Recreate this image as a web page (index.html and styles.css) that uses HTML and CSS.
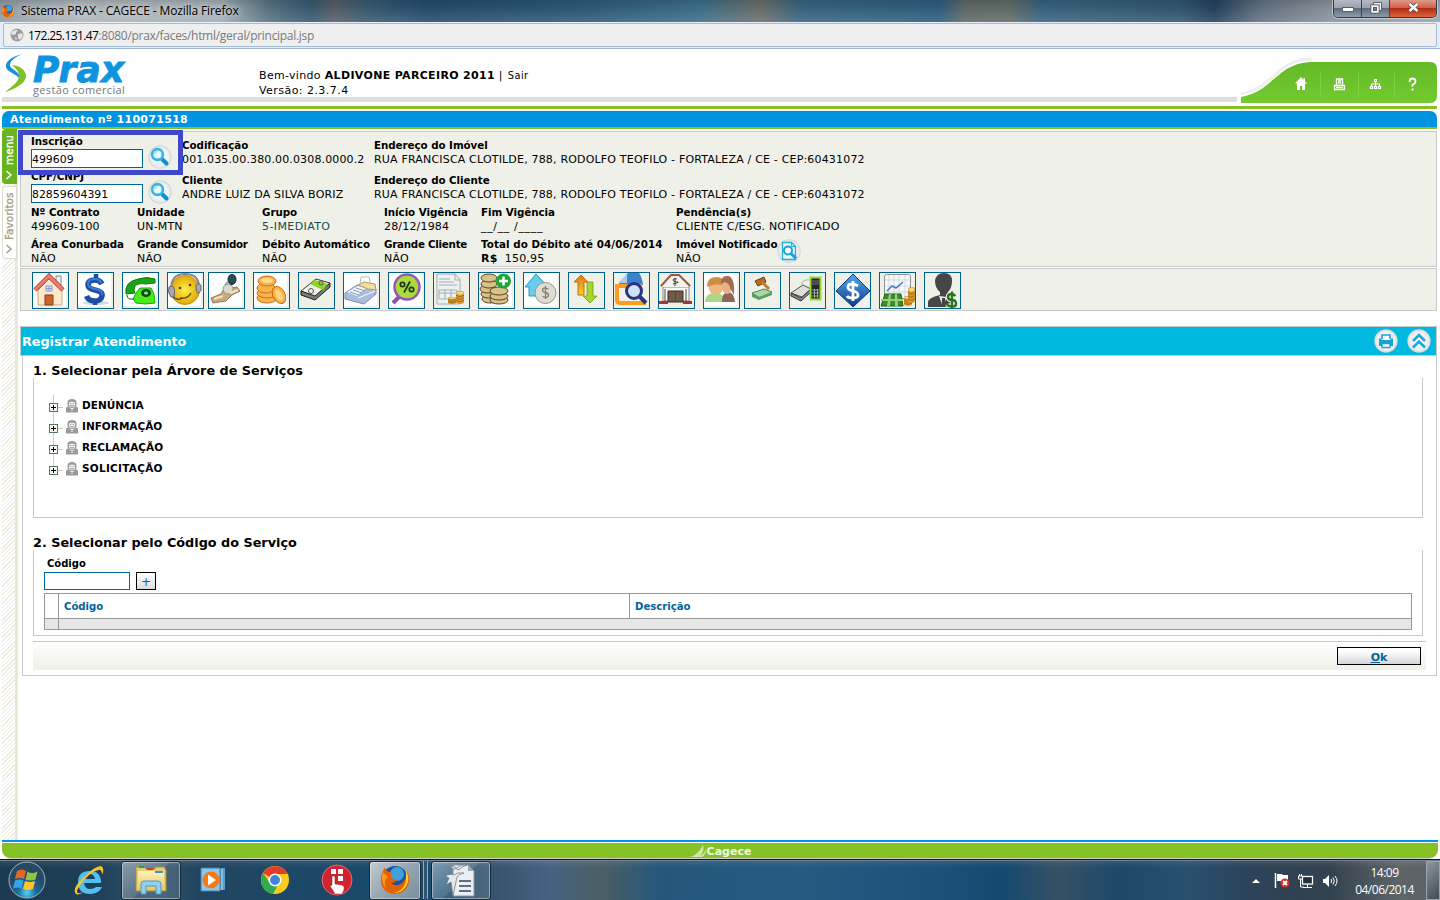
FILE: index.html
```html
<!DOCTYPE html>
<html lang="pt-BR">
<head>
<meta charset="utf-8">
<title>Sistema PRAX - CAGECE</title>
<link rel="stylesheet" href="styles.css">
</head>
<body>
<svg class="defs" width="0" height="0">
  <defs>
    <radialGradient id="disc"><stop offset="0" stop-color="#fff"/><stop offset=".8" stop-color="#eceeee"/><stop offset="1" stop-color="#cfd3d4"/></radialGradient>
    <linearGradient id="blueG" x2="0" y2="1"><stop offset="0" stop-color="#5aa7ea"/><stop offset="1" stop-color="#0b3f92"/></linearGradient>
    <linearGradient id="orangeG" x2="0" y2="1"><stop offset="0" stop-color="#d97a1c"/><stop offset="1" stop-color="#ffd21f"/></linearGradient>
    <radialGradient id="orb" cy=".85"><stop offset="0" stop-color="#4fd6f5"/><stop offset=".5" stop-color="#1b6b9c"/><stop offset="1" stop-color="#264a63"/></radialGradient>
    <radialGradient id="yel"><stop offset="0" stop-color="#fff04a"/><stop offset="1" stop-color="#e0a808"/></radialGradient>
    <linearGradient id="fold" x2="0" y2="1"><stop offset="0" stop-color="#fff3b8"/><stop offset="1" stop-color="#e5c767"/></linearGradient>
    <symbol id="fox" viewBox="0 0 32 32">
      <circle cx="16" cy="15" r="13" fill="#1c4f9e"/><circle cx="18" cy="10" r="7" fill="#3fa0dc"/>
      <path d="M4 7C1 13 1 20 5 25c5 6 15 7 21 1 5-5 6-13 1-20 1 5 0 9-3 12-3 4-9 4-12 1 3 0 5-1 6-3-3 0-5-1-6-4 1-1 2-2 1-3L8 7C7 6 6 5 6 3z" fill="#e66000"/>
      <path d="M26 5c5 7 4 15-1 20-3 3-7 4-10 4 7-2 12-7 12-14 0-4 0-7-1-10z" fill="#ffcb2e"/>
      <path d="M4 8c-2 6-1 12 3 16-2-6-1-9 2-11-2-2-4-3-5-5z" fill="#f79a1e"/>
    </symbol>
    <symbol id="mag" viewBox="0 0 24 24">
      <circle cx="12" cy="12" r="11.700" fill="url(#disc)"/>
      <path d="M14 14l4.500 4.500" stroke="#0a8fd8" stroke-width="4" stroke-linecap="round"/>
      <circle cx="9.500" cy="9.500" r="5.400" fill="#e9faff" stroke="#35b4ec" stroke-width="2.600"/>
      <path d="M6.500 9a3.400 3.400 0 0 1 3-2.700" stroke="#9adcf6" stroke-width="1.200" fill="none"/>
    </symbol>
    <symbol id="person" viewBox="0 0 14 14">
      <path d="M2.500 5V3.500q0-3.500 4.500-3.500t4.500 3.500V5q0 4-4.500 4T2.500 5z" fill="#999"/><path d="M4 4q0-1.500 3-1.500T10 4v1.500Q10 8 7 8T4 5.500z" fill="#eee"/>
      <path d="M5.200 4.500h1M7.800 4.500h1M5.500 6.500q1.500.8 3 0" stroke="#777" stroke-width=".8" fill="none"/>
      <path d="M1 13.500V9.500q0-2 2-2l4 3 4-3q2 0 2 2v4z" fill="#999"/><path d="M4 9.500q3 3 6 0l-3 2.500z" fill="#eee"/>
    </symbol>
    <symbol id="plus" viewBox="0 0 9 9">
      <rect x=".5" y=".5" width="8" height="8" fill="#f4f8f4" stroke="#56785b"/><path d="M2 4.500h5M4.500 2v5" stroke="#000"/>
    </symbol>
    <symbol id="stack" viewBox="0 0 12 18" preserveAspectRatio="none">
      <path d="M0 3v12q0 3 6 3t6-3V3z" fill="#d99a2b"/><path d="M0 6q6 4 12 0M0 9.500q6 4 12 0M0 13q6 4 12 0" stroke="#8a5410" fill="none"/><ellipse cx="6" cy="3" rx="6" ry="2.800" fill="#f8d679" stroke="#a86d1a" stroke-width=".7"/>
    </symbol>
  </defs>
</svg>

<div class="titlebar">
  <svg class="fav" width="14" height="14"><use href="#fox"/></svg>
  <span class="win-title">Sistema PRAX - CAGECE - Mozilla Firefox</span>
  <div class="winbtns">
    <span class="wb"><svg width="12" height="6"><rect x=".5" y=".5" width="11" height="4" fill="#fff" stroke="#555b69"/></svg></span>
    <span class="wb"><svg width="12" height="12"><path d="M3.500 3V.5h8v8H9" fill="#fff" stroke="#555b69"/><rect x=".8" y="2.800" width="8.400" height="8.400" fill="#fff" stroke="#555b69"/><rect x="3.500" y="5.500" width="3" height="3" fill="#777f8d" stroke="#555b69"/></svg></span>
    <span class="wb close"><svg width="13" height="11"><path d="M2.500 2l8 7M10.500 2l-8 7" stroke="#4d4654" stroke-width="4"/><path d="M2.500 2l8 7M10.500 2l-8 7" stroke="#fff" stroke-width="2.500"/></svg></span>
  </div>
</div>
<div class="urlwrap"><div class="urlbar">
  <svg width="14" height="14"><circle cx="7" cy="7" r="6.500" fill="#999"/><path d="M2 3.500l4-2 2 1.500-2 1v2L3 7 1 6zM8 6l4-1 1 3-3 4-2-2zM5 9l2 1-1 3z" fill="#e5e5e5"/></svg>
  <span class="url"><b>172.25.131.47</b>:8080/prax/faces/html/geral/principal.jsp</span>
</div></div>

<header class="header">
  <div class="logo">
    <svg width="22" height="40"><path d="M17 1C6 4 0 9 1 14c1 5 9 6 13 11 2-7-9-8-9-13 0-4 5-8 12-11z" fill="#0e93df"/><path d="M7 12c8 1 14 5 14 11 0 6-8 12-21 16 8-6 14-11 14-16 0-4-3-8-7-11z" fill="#80bf27"/></svg>
    <div class="logo-text"><span class="prax">Prax</span><span class="gestao">gestão comercial</span></div>
  </div>
  <div class="welcome"><div class="w1">Bem-vindo <b>ALDIVONE PARCEIRO 2011</b> | <span class="sair">Sair</span></div><div class="w2">Versão: 2.3.7.4</div></div>
  <svg class="greentab" width="200" height="49">
    <defs><linearGradient id="tab" x2="0" y2="1"><stop offset="0" stop-color="#65b927"/><stop offset="1" stop-color="#72ca30"/></linearGradient></defs>
    <path d="M1 39C35 33 36 4 72 4" fill="none" stroke="#eeefec" stroke-width="3"/>
    <path d="M1 42C35 36 36 7 74 7H190q7 0 7 7v27q0 7-7 7H1z" fill="url(#tab)"/>
    <path d="M80.500 18v24M118.500 18v24M154.500 18v24" stroke="#81d043"/>
    <path d="M61 22l-6 6.500h2V35h3v-4h2v4h3v-6.500h2l-2-2V23h-1.500v2z" fill="#fff"/>
    <path d="M96.500 30v-6h6v6M98 26h3M98 28h3M94.500 30.500h10v4h-10zM96 32.500h7" fill="none" stroke="#fff" stroke-width="1.300"/>
    <path d="M134.500 24.500h2v2h-2zM135.500 27v4M131.500 31v-2h8v2M130.500 31.500h2v2h-2zM134.500 31.500h2v2h-2zM138.500 31.500h2v2h-2z" fill="none" stroke="#fff" stroke-width="1.200"/>
    <path d="M169.500 27q0-3.500 3-3.500t3 3q0 1.700-1.800 2.500t-1.200 2.600M172.500 33.500v2" fill="none" stroke="#fff" stroke-width="1.800"/>
  </svg>
</header>
<div class="grayline"></div>
<div class="greenline"></div>
<div class="attend">Atendimento nº 110071518</div>
<div class="greenline2"></div>

<div class="main">
  <aside class="side">
    <div class="tab-menu"><svg width="8" height="10"><path d="M6.500 1L2 5l4.500 4" fill="none" stroke="#fff" stroke-width="1.500"/></svg><span>menu</span></div>
    <div class="tab-fav"><svg width="8" height="10"><path d="M6.500 1L2 5l4.500 4" fill="none" stroke="#a79c82" stroke-width="1.500"/></svg><span>Favoritos</span></div>
  </aside>
  <div class="content">
    <section class="info">
      <div class="r r1">
        <div class="fld"><b>Inscrição</b><div class="inrow"><span class="inp">499609</span><svg width="24" height="24"><use href="#mag"/></svg></div></div>
        <div class="d"><b>Codificação</b><span class="num">001.035.00.380.00.0308.0000.2</span></div>
        <div class="d"><b>Endereço do Imóvel</b><span class="adr">RUA FRANCISCA CLOTILDE, 788, RODOLFO TEOFILO - FORTALEZA / CE - CEP:60431072</span></div>
        <div class="highlight"></div>
      </div>
      <div class="r r1 r2">
        <div class="fld"><b>CPF/CNPJ</b><div class="inrow"><span class="inp">82859604391</span><svg width="24" height="24"><use href="#mag"/></svg></div></div>
        <div class="d"><b>Cliente</b><span>ANDRE LUIZ DA SILVA BORIZ</span></div>
        <div class="d"><b>Endereço do Cliente</b><span class="adr">RUA FRANCISCA CLOTILDE, 788, RODOLFO TEOFILO - FORTALEZA / CE - CEP:60431072</span></div>
      </div>
      <div class="r r3">
        <div><b>Nº Contrato</b><span>499609-100</span></div>
        <div><b>Unidade</b><span>UN-MTN</span></div>
        <div><b>Grupo</b><span class="teal">5-IMEDIATO</span></div>
        <div><b>Início Vigência</b><span>28/12/1984</span></div>
        <div><b>Fim Vigência</b><span class="blank">__/__ /____</span></div>
        <div><b>Pendência(s)</b><span>CLIENTE C/ESG. NOTIFICADO</span></div>
      </div>
      <div class="r r3 r4">
        <div><b>Área Conurbada</b><span>NÃO</span></div>
        <div><b class="tight">Grande Consumidor</b><span>NÃO</span></div>
        <div><b>Débito Automático</b><span>NÃO</span></div>
        <div><b class="tight">Grande Cliente</b><span>NÃO</span></div>
        <div><b class="loose">Total do Débito até 04/06/2014</b><span><strong>R$</strong>&nbsp; 150,95</span></div>
        <div class="notif"><div><b>Imóvel Notificado</b><span>NÃO</span></div>
          <svg width="24" height="24"><circle cx="12" cy="12" r="11.700" fill="url(#disc)"/><path d="M5.500 3.500h9l4 4v13h-13z" fill="#e8f9fe" stroke="#27abdf" stroke-width="1.300"/><path d="M14.500 3.500v4h4" fill="none" stroke="#27abdf"/><circle cx="11" cy="11.500" r="4" fill="#fff" stroke="#18a0dc" stroke-width="2"/><path d="M14 14.500l5 5" stroke="#18a0dc" stroke-width="3"/></svg></div>
      </div>
    </section>

    <nav class="tools">
      <span class="t w"><svg viewBox="0 0 35 35"><path d="M5 17v15h24V16L16 6z" fill="#fbe9c8" stroke="#c7a98b"/><path d="M23 3h5v10h-5z" fill="#eee" stroke="#888"/><path d="M2 17L16 3l14 14" fill="none" stroke="#a83d34" stroke-width="4.500"/><path d="M2 17L16 3l14 14" fill="none" stroke="#ee7d6c" stroke-width="3"/><path d="M12 22h8v10h-8z" fill="#c9652b" stroke="#8b3a18"/><path d="M13 13h6v5h-6zM16 13v5M13 15.500h6" fill="#dbe5ff" stroke="#8c97d8"/></svg></span>
      <span class="t w"><svg viewBox="0 0 35 35"><ellipse cx="18" cy="30" rx="13" ry="2" fill="#d8dade"/><path d="M24 11q-2-4-7-4-7 0-7 5 0 3.500 7 5 8 1.500 7 6-1 5-7.500 5-6 0-8-5" fill="none" stroke="#1c4fa3" stroke-width="5.500"/><path d="M18 1v5M17 28v4" stroke="#1c4fa3" stroke-width="4.500"/><path d="M23.500 10q-2-4-6.500-4-7 0-7 5 0 3.500 7 5 8 1.500 7 6" fill="none" stroke="#3b7ed4" stroke-width="2"/></svg></span>
      <span class="t w"><svg viewBox="0 0 35 35"><path d="M3 21Q1 9 15 6q9-3 17 0v4l-9 1q-12-2-12 6l1 3z" fill="#19a514" stroke="#0c7a0c"/><path d="M13 20l4-5h11l3 6 1 9q-10 2-19 0l-3-4z" fill="#4bea1d" stroke="#18a50d"/><ellipse cx="23" cy="20" rx="5" ry="4" fill="#0b4b12"/><ellipse cx="23" cy="20" rx="2" ry="1.500" fill="#8ff56b"/><path d="M4 22q0 5 7 4" stroke="#252" fill="none"/></svg></span>
      <span class="t w"><svg viewBox="0 0 35 35"><circle cx="17" cy="17" r="14.500" fill="url(#yel)" stroke="#c89408"/><path d="M3 16Q3 1 17 1t14 13" fill="none" stroke="#858795" stroke-width="2"/><path d="M1 14q4-2 5 1t0 9H3q-4-5-2-10zM28 12q4-3 5 1 1 5-2 7-3 1-3-8z" fill="#a6a9b5" stroke="#666"/><path d="M5 24q3 3 8 2M12 25q8 1 11-5" fill="none" stroke="#6b4a10" stroke-width="1.500"/><circle cx="12" cy="15" r="1.300" fill="#543a08"/><circle cx="22" cy="12" r="1.300" fill="#543a08"/></svg></span>
      <span class="t w near"><svg viewBox="0 0 35 35"><path d="M2 25l10-4 3-5 7-1 6-1 3 4-8 4-6 6-7 1-6 1z" fill="#c9a981" stroke="#8e7656"/><circle cx="19" cy="16" r="5" fill="#ddd8cb" stroke="#998"/><ellipse cx="23" cy="6.500" rx="4" ry="5" fill="#294d52" stroke="#122"/><path d="M19 9l-3 3" stroke="#8aa" stroke-width="2"/><path d="M5 26l9-3M21 20l8-3" stroke="#fae3bb" stroke-width="2"/></svg></span>
      <span class="t w"><svg viewBox="0 0 35 35"><g fill="#f9b34c" stroke="#cc6c0c"><ellipse cx="13" cy="25" rx="10" ry="5"/><ellipse cx="13" cy="20" rx="10" ry="5"/><ellipse cx="12" cy="15" rx="9" ry="5"/><ellipse cx="13" cy="8" rx="9" ry="5"/><ellipse cx="25" cy="22" rx="6" ry="9" transform="rotate(-28 25 22)"/></g><ellipse cx="13" cy="7.500" rx="6" ry="2.500" fill="#ffdc8d"/><ellipse cx="25" cy="22" rx="3" ry="6" transform="rotate(-28 25 22)" fill="#ffd47d"/></svg></span>
      <span class="t"><svg viewBox="0 0 35 35"><path d="M2 18L17 6l14 4-15 14z" fill="#edf0e8" stroke="#383c34"/><path d="M2 18v4l14 5 15-13v-4L16 23z" fill="#777d70" stroke="#222"/><path d="M11 11l5-4 13 4-5 6z" fill="#8bd51d"/><circle cx="12" cy="18" r="2.500" fill="none" stroke="#555"/><circle cx="22" cy="10" r="2" fill="none" stroke="#555"/></svg></span>
      <span class="t w"><svg viewBox="0 0 35 35"><path d="M1 20l12-8 19 4v5L20 31 1 26z" fill="#a9bddd" stroke="#7d91b5"/><path d="M3 19l11-6 8 2-9 8z" fill="#f4f7fc"/><path d="M16 11l1-7 8 0 2 9" fill="#fff" stroke="#b4bccb"/><path d="M14 12l6-3 11 2 1 6-8-1z" fill="#f3dea0" stroke="#a99c70"/><path d="M6 19l9 3M9 17l9 3M12 15l9 3" stroke="#8697b6"/><path d="M14 25l17-7" stroke="#fff"/></svg></span>
      <span class="t w"><svg viewBox="0 0 35 35"><path d="M10 24l-6 6" stroke="#8e4db0" stroke-width="4"/><circle cx="18" cy="14" r="12.500" fill="#a9dc3b" stroke="#9a55ba" stroke-width="2.500"/><path d="M21 8.500l-6 11" stroke="#223618" stroke-width="1.800"/><circle cx="13.500" cy="11.500" r="2.200" fill="none" stroke="#223618" stroke-width="1.700"/><circle cx="22.500" cy="16.500" r="2.200" fill="none" stroke="#223618" stroke-width="1.700"/></svg></span>
      <span class="t"><svg viewBox="0 0 35 35"><path d="M3 1h18l5 6v24H3z" fill="#eef1ee" stroke="#a3acae"/><path d="M21 1v6h5M5 6h11M5 9h15M5 12h18M5 17h18v9H5zM5 20h18M11 17v9M17 17v9" fill="none" stroke="#9bafb8"/><use href="#stack" x="14" y="24" width="8" height="7"/><use href="#stack" x="22" y="18" width="8" height="13"/></svg></span>
      <span class="t w"><svg viewBox="0 0 35 35"><g fill="#d8c287" stroke="#574322"><ellipse cx="11" cy="26" rx="8" ry="4"/><ellipse cx="10" cy="21" rx="8" ry="4"/><ellipse cx="9" cy="16" rx="8" ry="4"/><ellipse cx="10" cy="11" rx="8" ry="4"/><ellipse cx="10" cy="5" rx="8" ry="4"/><ellipse cx="20" cy="27" rx="9" ry="4"/><ellipse cx="20" cy="23" rx="9" ry="4"/><ellipse cx="20" cy="18" rx="9" ry="4"/></g><circle cx="24.500" cy="8" r="7.500" fill="#1ba534"/><path d="M20 8h9M24.500 3.500v9" stroke="#fff" stroke-width="2.500"/></svg></span>
      <span class="t w"><svg viewBox="0 0 35 35"><path d="M1 14L12 1l12 13h-6v9H5v-9z" fill="#69cceb" stroke="#2e97c6"/><circle cx="21.500" cy="20" r="10.500" fill="#dedbd0" stroke="#96938a"/><path d="M24.500 16q-6-2-6 1 0 2 3 2.500t3 3q-1 3-6 1M21.500 13v13" fill="none" stroke="#85806f" stroke-width="1.300"/></svg></span>
      <span class="t"><svg viewBox="0 0 35 35"><path d="M5 9l7-7 7 7h-4v13H9V9z" fill="url(#orangeG)" stroke="#c56b15"/><path d="M18 9h6v14h4l-7 7-7-7h4z" fill="#a8d52b" stroke="#6e9c18" stroke-width=".8"/></svg></span>
      <span class="t"><svg viewBox="0 0 35 35"><path d="M4 12L14 0h11q3 4 4 12z" fill="#3d80cd"/><path d="M4 10l9-9v9z" fill="#a9cdf0"/><path d="M28 13H3v14q0 3 3 3h26" fill="none" stroke="#ff9c20" stroke-width="4"/><path d="M5 15h24v13H7q-2 0-2-2z" fill="#eff0e7"/><circle cx="20" cy="18" r="7.500" fill="#cfe2fa" stroke="#263580" stroke-width="3"/><path d="M26 24l6 6" stroke="#263580" stroke-width="4"/></svg></span>
      <span class="t"><svg viewBox="0 0 35 35"><path d="M4 14h26v14H4z" fill="#f7f7f5" stroke="#888"/><path d="M3 14L11 2h9l10 12z" fill="#f2f2ee"/><path d="M2 13L12 2h8l11 11" fill="none" stroke="#a4563a" stroke-width="2"/><path d="M9 18h15v11H9z" fill="#735947" stroke="#352c28"/><path d="M16.500 18v11M6 16v12M27 16v12" stroke="#50443c"/><path d="M0 29.500h9M24 29.500h9" stroke="#b0302a" stroke-width="3"/><path d="M18 6q-4-1-4 1t4 2-4 2M16 5v8" fill="none" stroke="#444"/></svg></span>
      <span class="t w"><svg viewBox="0 0 35 35"><path d="M1 29q0-9 10-9t9 9z" fill="#a9d98a"/><path d="M18 29q0-10 6-10t7 10z" fill="#8c6758"/><circle cx="12" cy="14" r="7.500" fill="#f0b782"/><path d="M3 14Q3 4 12 4t9 9q-9-4-18 1z" fill="#cf8f43"/><ellipse cx="23" cy="13" rx="5" ry="8" fill="#e7b18a"/><path d="M17 11q0-9 7-8 7 1 6 19l-4-7q0-4-5-6z" fill="#a36c4b"/></svg></span>
      <span class="t near"><svg viewBox="0 0 35 35"><path d="M7 20l12-4 8 3-12 6z" fill="#a7d9a3" stroke="#4c8d59"/><path d="M7 20v4l7 3 13-5v-3l-13 5z" fill="#5e9e65"/><path d="M10 8l9-4 2 5-8 4z" fill="#b86c20" stroke="#753c0a"/><path d="M17 9l7 7" stroke="#bd7c2f" stroke-width="3"/></svg></span>
      <span class="t"><svg viewBox="0 0 35 35"><path d="M1 20l12-8 8 4-9 8z" fill="#dce0d8" stroke="#50564e"/><path d="M1 20v3l10 5 10-9v-3L11 25z" fill="#888" stroke="#333"/><path d="M12 12q0-6 7-5" fill="none" stroke="#aaa"/><rect x="20.500" y="4.500" width="10" height="22" fill="#242c22" stroke="#94d936" stroke-width="2"/><path d="M22 7h7v5h-7z" fill="#4b4b50"/><path d="M22 17h7M22 20h7M22 23h7M24.500 16v9M27.500 16v9" stroke="#cdd1ca" stroke-width=".7"/></svg></span>
      <span class="t"><svg viewBox="0 0 35 35"><path d="M1 18L18 1l17 17-17 16z" fill="url(#blueG)" stroke="#0c3877"/><path d="M23 13q-3-2-6-2-4 0-4 3t5 4 5 4-5 3-6-2M18 8v20" fill="none" stroke="#fff" stroke-width="2.800"/></svg></span>
      <span class="t"><svg viewBox="0 0 35 35"><rect x="4.500" y="1.500" width="26" height="24" rx="2" fill="#f6f8f8" stroke="#8d9292"/><path d="M9 2v23M14 2v23M19 2v23M25 2v23M5 7h25M5 13h25M5 19h25" stroke="#d4d9dc"/><path d="M7 18l5-5 4 2 7-6" fill="none" stroke="#487cc0" stroke-width="1.500"/><path d="M5 21h16l2 12H1z" fill="#398e2a" stroke="#1f611a"/><path d="M9 21h2l-1 12H7zM15 21h2l1 12h-3zM1 26h22v2H1z" fill="#9ccf7c"/><use href="#stack" x="24" y="23" width="8" height="10"/><use href="#stack" x="28" y="14" width="7" height="16"/></svg></span>
      <span class="t"><svg viewBox="0 0 35 35"><path d="M10 8q1-8 9-8t8 8q0 7-4 11v5h-8v-5q-5-4-5-11z" fill="#464646"/><path d="M3 34v-5q0-4 12-7 4 4 8 0l8 4v8z" fill="#464646"/><path d="M14 23l4 11 4-10" fill="#e8e8e3"/><path d="M17 25h3l1 9h-4z" fill="#444"/><path d="M30.500 23q-2-2-4-2-3.500 0-3.500 3t4 3 4 3.500-4 3-5-2M27 18.500V35" fill="none" stroke="#eff0e7" stroke-width="4.500"/><path d="M30.500 23q-2-2-4-2-3.500 0-3.500 3t4 3 4 3.500-4 3-5-2M27 18.500V35" fill="none" stroke="#257420" stroke-width="2.400"/></svg></span>
    </nav>

    <section class="panel">
      <div class="phead"><span>Registrar Atendimento</span>
        <svg width="24" height="24"><circle cx="12" cy="12" r="11.700" fill="url(#disc)"/><path d="M8 10V6h8v4" fill="#fff" stroke="#17a4d8" stroke-width="1.600"/><path d="M5 9.500h2.500V11h9V9.500H19V17H5z" fill="#17a4d8"/><path d="M8 14.500h8v4H8z" fill="#fff" stroke="#17a4d8" stroke-width="1.400"/></svg>
        <svg width="24" height="24"><circle cx="12" cy="12" r="11.700" fill="url(#disc)"/><path d="M6 12l6-6 6 6M6 18.500l6-6 6 6" fill="none" stroke="#1ba8dc" stroke-width="2.600"/></svg>
      </div>
      <div class="pbody">
        <h2>1. Selecionar pela Árvore de Serviços</h2>
        <div class="box tree">
          <div class="node"><svg class="pl" width="9" height="9"><use href="#plus"/></svg><svg class="pe" width="14" height="14"><use href="#person"/></svg><b>DENÚNCIA</b></div>
          <div class="node"><svg class="pl" width="9" height="9"><use href="#plus"/></svg><svg class="pe" width="14" height="14"><use href="#person"/></svg><b>INFORMAÇÃO</b></div>
          <div class="node"><svg class="pl" width="9" height="9"><use href="#plus"/></svg><svg class="pe" width="14" height="14"><use href="#person"/></svg><b>RECLAMAÇÃO</b></div>
          <div class="node"><svg class="pl" width="9" height="9"><use href="#plus"/></svg><svg class="pe" width="14" height="14"><use href="#person"/></svg><b class="sol">SOLICITAÇÃO</b></div>
        </div>
        <h2 class="h2b">2. Selecionar pelo Código do Serviço</h2>
        <div class="box code">
          <b class="cl">Código</b>
          <div class="crow"><span class="cinp"></span><span class="cbtn">+</span></div>
          <div class="grid"><i></i><b>Código</b><b>Descrição</b><i class="g"></i><i class="g wide"></i></div>
        </div>
        <div class="okbar"><span class="ok"><u>O</u>k</span></div>
      </div>
    </section>
  </div>
</div>

<footer class="foot"><div class="fblue"></div><div class="fgreen">
  <svg width="18" height="14"><path d="M1 13Q9 11 14 1q2 6-4 12zM8 13q7-2 9-8 0 6-4 8z" fill="#cfe8a8"/></svg><span>Cagece</span></div></footer>

<div class="taskbar">
  <svg class="start" width="38" height="38"><circle cx="19" cy="19" r="18" fill="url(#orb)" stroke="#9bb6c4"/><path d="M9 10q5-3 9 0l-2 8q-4-2-9 0z" fill="#e8622a"/><path d="M19.500 10.500q4 3 10 0l-2 8q-5 2-10 0z" fill="#8fc63d"/><path d="M7 19.500q4-2 8.500 0l-2 8q-4-2-8.500 0z" fill="#35a4e6"/><path d="M17 20q5 2 10 0l-2 8q-5 2-10 0z" fill="#ffc42e"/></svg>
  <span class="tb"><svg width="34" height="34"><path d="M29 20H12q1 6 6 6 4 0 6-2h6q-3 7-12 7-12 0-12-12 0-11 12-11 11 0 11 12zM12 16h11q-1-5-5.500-5T12 16z" fill="#4fc0f2"/><path d="M4 31q-5-5 8-17Q23 3 29 3q4 2 1 9 0-6-4-5Q18 9 9 21q-6 8-3 9 2 1 6-2-5 5-8 3z" fill="#fbc31f"/></svg></span>
  <span class="tb act"><svg width="36" height="34"><path d="M3 4h8l2 2h9V4h9l2 3v21H3z" fill="#e6cc74" stroke="#a98d38"/><path d="M5 8h26v19H5z" fill="url(#fold)"/><path d="M6 4h5" stroke="#2f9d45" stroke-width="2"/><path d="M14 6h6" stroke="#cc3c2b" stroke-width="2"/><path d="M22 9h8" stroke="#3a8fcf" stroke-width="2"/><path d="M8 31V21q0-3 3-3h14q3 0 3 3v10h-5v-8H13v8z" fill="#8ed0ed" stroke="#4e9cc2"/></svg></span>
  <span class="tb"><svg width="34" height="34"><path d="M14 5h15v22H14z" fill="#5a9ec8"/><path d="M5 5h19v23H5z" fill="#8dc6e8" stroke="#3e7fae"/><path d="M26 6v21" stroke="#b8dcf0"/><circle cx="15" cy="17" r="8.500" fill="#f57a18"/><path d="M12 11.500l8 5.500-8 5.500z" fill="#fff"/></svg></span>
  <span class="tb"><svg width="32" height="32"><circle cx="16" cy="16" r="14" fill="#fbcb1d"/><path d="M16 16L4 9a14 14 0 0 1 24.500 1H16z" fill="#e33b2e"/><path d="M4 9a14 14 0 0 0 10 21l6-11-4-3-5 3z" fill="#36a852"/><circle cx="16" cy="16" r="6.500" fill="#fff"/><circle cx="16" cy="16" r="5" fill="#4285d8"/></svg></span>
  <span class="tb"><svg width="32" height="32"><circle cx="16" cy="16" r="15" fill="#cf2430" stroke="#e66a70"/><path d="M10 5h5v5h-5zM17 5h5v5h-5zM17 12h5v5h-5z" fill="#fff"/><path d="M11 12h3v8l7 1q3 1 2 5l-2 4h-7l-5-8 2-1z" fill="#fff" stroke="#a11" stroke-width=".5"/></svg></span>
  <span class="tb act ff"><svg width="32" height="32"><use href="#fox"/></svg></span><span class="ffedge"></span>
  <span class="tb act oo"><svg width="34" height="34"><path d="M9 2h15l6 6v25H9z" fill="#eceff2" stroke="#8b949e"/><path d="M24 2v6h6" fill="#9ea6ae"/><path d="M15 18h12M15 23h12M15 28h12" stroke="#5d6f80" stroke-width="2"/><path d="M3 4q6-2 10 1 4-4 10-3-5 1-8 5-3-2-6-1 0-2-6-2zM1 13q6-3 9-1 3-3 10-2-5 1-7 4l-4 19-2-14-5 3 3-7z" fill="#e4e8eb" stroke="#66727b" stroke-width=".7"/></svg></span>
  <div class="tray">
    <svg width="10" height="6"><path d="M1 5l4-4 4 4z" fill="#fff"/></svg>
    <svg class="flag" width="16" height="17"><path d="M1.500 1v15" stroke="#fff" stroke-width="1.500"/><path d="M3 2h5l1 1h5v7H9L8 9H3z" fill="#fff"/><circle cx="11" cy="11" r="4.500" fill="#dc2c23"/><path d="M9 9l4 4M13 9l-4 4" stroke="#fff" stroke-width="1.800"/></svg>
    <svg class="net" width="16" height="16"><rect x="4.500" y="3.500" width="10" height="7.500" fill="#20303c" stroke="#fff" stroke-width="1.300"/><path d="M9.500 11v3M5 14.500h9M.5 3h4v3h-4zM1.500 1v2M3.500 1v2M2.500 6v8h3" stroke="#fff" fill="none"/></svg>
    <svg class="vol" width="16" height="14"><path d="M1 5h2l4-4v12L3 9H1z" fill="#fff"/><path d="M9 5q1 2 0 4M11 3.500q2.500 3.500 0 7M13 2q4 5 0 10" fill="none" stroke="#fff"/></svg>
    <div class="clock"><span>14:09</span><span class="date">04/06/2014</span></div>
    <span class="peek"></span>
  </div>
</div>
</body>
</html>
```
FILE: styles.css
```css
* { box-sizing: border-box; }
body { margin: 0; width: 1440px; height: 900px; overflow: hidden; display: flex; flex-direction: column; background: #fff; font: 11px/14px Verdana, "DejaVu Sans", sans-serif; color: #000; }
.defs { position: absolute; }
svg { display: block; flex: none; }
b { white-space: nowrap; }

/* browser window frame */
.titlebar { height: 22px; flex: none; display: flex; align-items: flex-start; padding-left: 1px; background: linear-gradient(180deg, rgba(0,0,0,.12), transparent 40%, rgba(255,255,255,.12)), linear-gradient(90deg, #8e9aa2 0, #adb5b8 80px, #a1adb3 220px, #55707f 270px, #35586f 310px, #565d65 335px, #365970 370px, #244b6b 430px, #2d5877 580px, #3c6d89 700px, #6b6d68 760px, #38647f 800px, #2e5c7c 940px, #5f6866 965px, #606a66 1010px, #39637d 1040px, #31566f 1180px, #24415c 1215px, #617080 1260px, #87919a 1330px, #9ba3aa 1440px); }
.fav { margin-top: 4px; }
.win-title { margin-left: 6px; font: 12px/22px "Open Sans", sans-serif; letter-spacing: -.12px; white-space: nowrap; text-shadow: 0 0 6px #fff; }
.winbtns { margin-left: auto; margin-right: 3px; height: 18px; width: 104px; display: flex; border: 1px solid #303946; border-top: 0; border-radius: 0 0 5px 5px; overflow: hidden; box-shadow: 0 0 0 1px rgba(255,255,255,.45); }
.wb { width: 28px; display: flex; justify-content: center; align-items: center; background: linear-gradient(#b3bac4, #9aa2ae 45%, #5f6c7d 50%, #8e9ba9); border-right: 1px solid #3b4450; padding-bottom: 2px; }
.wb:first-child { padding-top: 4px; }
.wb.close { flex: 1; border: 0; background: linear-gradient(#df9b8c, #d06048 45%, #b62c12 50%, #d8653d); }
.urlwrap { height: 27px; flex: none; background: #e3eefa; border-bottom: 1px solid #9db5d0; padding: 1px 3px 2px; }
.urlbar { height: 24px; background: #efefef; border: 1px solid #a5bdd3; border-radius: 2px; display: flex; align-items: center; padding-left: 6px; }
.url { margin-left: 4px; font: 12px/22px "Open Sans", sans-serif; color: #7a7a7a; white-space: nowrap; letter-spacing: -.3px; padding-top: 2px; }
.url b { font-weight: 400; color: #000; letter-spacing: -.6px; }

/* application header */
.header { height: 48px; flex: none; display: flex; position: relative; z-index: 1; }
.logo { width: 259px; display: flex; padding: 4px 0 0 5px; }
.logo-text { display: flex; flex-direction: column; margin-left: 6px; }
.prax { font: italic bold 36px/33px "DejaVu Sans", sans-serif; color: #0e93df; letter-spacing: .2px; height: 31px; -webkit-text-stroke: .9px #0e93df; }
.gestao { font: 11px/12px "Open Sans", sans-serif; color: #777; letter-spacing: .35px; white-space: nowrap; }
.welcome { padding-top: 19px; line-height: 15px; white-space: nowrap; letter-spacing: .33px; }
.w2 { letter-spacing: .45px; }
.sair { font-size: 9.800px; margin-left: 1px; letter-spacing: .5px; }
.greentab { margin: 6px 0 0 auto; height: 49px; }
.grayline { height: 5px; flex: none; margin: 0 203px 0 2px; background: #dedede; }
.greenline { height: 3px; flex: none; margin: 4px 3px 1px 2px; background: #86c226; }
.attend { height: 16px; flex: none; margin: 1px 3px 0 2px; padding-left: 8px; background: #0093df; border-radius: 7px 7px 0 0; color: #fff; font-weight: bold; line-height: 17px; letter-spacing: .3px; }
.greenline2 { height: 2px; flex: none; margin: 0 3px 0 2px; background: #86c226; }

.main { flex: 1; min-height: 0; display: flex; padding: 0 3px 0 2px; }
.side { width: 16px; border-right: 1px solid #ebe9db; background: repeating-linear-gradient(135deg, #fff 0 2px, #eeecdf 2px 3px); box-shadow: inset -2px 0 #e8e8d8; margin-right: 2px; }
.side > div { writing-mode: vertical-rl; transform: rotate(180deg); width: 15px; display: flex; align-items: center; line-height: 15px; white-space: nowrap; font-size: 10.500px; }
.tab-menu { height: 55px; background: #67b41e; border-radius: 0 4px 4px 0; color: #fff; gap: 5px; padding-top: 4px; -webkit-text-stroke: .3px #fff; }
.tab-fav { height: 73px; margin-top: 2px; background: #fff; border: 1px solid #dddbcf; border-radius: 0 4px 4px 0; color: #a79c82; gap: 4px; padding-top: 4px; -webkit-text-stroke: .3px #a79c82; }
.content { flex: 1; min-width: 0; }

/* customer data */
.info { margin-top: 2px; height: 136px; border: 1px solid #c9c9c9; background: #eff0e7; white-space: nowrap; letter-spacing: .18px; }
.info b, .info .d span, .r3 div > span { display: block; height: 14px; line-height: 16px; }
.info b { font-size: 10.300px; letter-spacing: -.04px; line-height: 14px; }
.info b.tight { letter-spacing: -.25px; }
.info b.loose { letter-spacing: .08px; }
.r { padding-left: 10px; display: grid; }
.r1 { position: relative; height: 35px; grid-template-columns: 151px 192px 1fr; }
.r .d { padding-top: 6px; }
.fld { padding-top: 2px; }
.inrow { display: flex; height: 20px; padding-top: 1px; }
.inrow svg { margin: -4px 0 0 5px; }
.inp { width: 112px; height: 19px; border: 1px solid #006699; background: #fff; line-height: 19px; letter-spacing: 0; font-size: 10.900px; }
.info .num { letter-spacing: .14px; }
.highlight { position: absolute; z-index: 2; left: -3px; top: -2px; width: 165px; height: 45px; border: 5px solid #3f48cc; }
.r3 { margin-top: 3px; height: 32px; grid-template-columns: 106px 125px 122px 97px 195px 1fr; }
.r4 { margin-top: 0; }
.teal { color: #164e4e; letter-spacing: .4px; }
.blank { letter-spacing: .65px; }
.notif { display: flex; }
.notif svg { margin: 2px 0 0 0; }

.tools { margin-top: 1px; height: 43px; border: 1px solid #c9c9c9; background: #eff0e7; display: flex; gap: 8px; padding: 3px 0 0 11px; }
.t { width: 37px; height: 37px; border: 1px solid #006089; }
.t.w { background: #fff; box-shadow: inset -2px -2px #eff0e7; }
.t.near { margin-left: -4px; }
.t svg { width: 35px; height: 35px; }

/* service panel */
.panel { margin-top: 15px; }
.phead { height: 30px; border: 1px solid #c9c9c9; background: #00b9e1; display: flex; align-items: center; color: #fff; font-weight: bold; font-size: 12.750px; padding: 0 5px 0 1px; gap: 9px; }
.phead span { flex: 1; padding-top: 2px; }
.pbody { margin-left: 2px; border: 1px solid #c9c9c9; border-top: 0; height: 320px; padding: 6px 10px 0 10px; }
h2 { margin: 0; height: 16px; font-size: 12.800px; line-height: 18px; white-space: nowrap; }
.box { border: 1px solid #c9c9c9; border-top: 0; margin-right: 3px; }
.tree { height: 140px; padding: 17px 0 0 15px; }
.node { height: 21px; display: flex; align-items: center; position: relative; font-size: 10.500px; }
.node b { margin-top: -1px; }
.node .sol { letter-spacing: .25px; }
.node::before { content: ""; position: absolute; left: 4px; top: 0; height: 21px; width: 10px; border-left: 1px solid #cfcbb8; background: linear-gradient(#cfcbb8, #cfcbb8) 0 12px / 9px 1px no-repeat; }
.node:last-child::before { height: 13px; }
.pl { margin-top: 3px; position: relative; }
.pe { margin: 1px 3px 0 7px; }
.h2b { margin-top: 16px; }
.code { height: 86px; padding: 6px 10px 0; }
.cl { display: block; font-size: 10px; margin-left: 3px; height: 16px; line-height: 16px; }
.crow { display: flex; gap: 6px; height: 21px; }
.cinp { width: 86px; height: 18px; border: 1px solid #006699; }
.cbtn { width: 20px; height: 18px; border: 1px solid #000; background: linear-gradient(#fff, #dcdce0); color: #006699; text-align: center; line-height: 18px; font-size: 12px; }
.grid { display: grid; grid-template-columns: 14px 571px 1fr; grid-template-rows: 25px 11px; border: solid #999; border-width: 1px 0 0 1px; color: #006699; font-size: 10.100px; }
.grid > * { border: solid #999; border-width: 0 1px 1px 0; line-height: 25px; padding-left: 5px; }
.grid .g { background: #e6e6e6; }
.grid .wide { grid-column: 2 / 4; }
.okbar { margin: 5px 0 0; height: 29px; border-top: 1px solid #c9c9c9; background: linear-gradient(#fff, #eff0e7); display: flex; justify-content: flex-end; padding: 5px 5px 0; }
.ok { width: 84px; height: 18px; border: 1px solid #000; background: linear-gradient(#fff 20%, #d5d5d9); text-align: center; color: #006699; font-weight: bold; line-height: 19px; }

.foot { height: 19px; flex: none; padding: 0 2px; background: #fff; }
.fblue { height: 2px; background: #0093df; }
.fgreen { margin-top: 1px; height: 16px; border-radius: 0 0 9px 9px; background: #86c226; border-bottom: 1px solid #ccd0c6; display: flex; justify-content: center; align-items: center; color: #f1f8e6; font: bold 11px/15px "DejaVu Sans", sans-serif; }
.fgreen span { padding-top: 1px; }

.taskbar { height: 41px; flex: none; display: flex; align-items: center; border-top: 1px solid #101a22; box-shadow: inset 0 1px #71828e; background: linear-gradient(rgba(255,255,255,.1), transparent 20%), linear-gradient(90deg, #1c3a51 0, #1f4058 100px, #30546c 150px, #22455f 200px, #1d4867 300px, #164b70 440px, #35536c 490px, #466280 550px, #4a5f65 600px, #25577b 660px, #255a81 800px, #1d5079 940px, #15496f 1000px, #355164 1060px, #1d4869 1120px, #284f6e 1190px, #2c4358 1250px, #33424f 1330px, #5d6569 1400px, #5a6266 1440px); padding-left: 8px; }
.start { margin-right: 13px; }
.tb { width: 60px; height: 39px; display: flex; align-items: center; justify-content: center; margin-right: 2px; }
.act { border: 1px solid #182b38; border-radius: 3px; box-shadow: inset 0 0 0 1px rgba(255,255,255,.4); background: linear-gradient(135deg, rgba(255,255,255,.45), rgba(255,255,255,.22) 50%, rgba(255,255,255,.12) 51%); }
.ff { width: 52px; background: linear-gradient(135deg, #c3ccd2, #95a5b1 50%, #7890a0); margin-right: 0; }
.ffedge { width: 7px; height: 38px; border: solid #9aa9b4; border-width: 0 1px 0 0; margin-right: 3px; box-shadow: inset -3px 0 #35536c, inset -4px 0 #9aa9b4; }
.tray { margin-left: auto; display: flex; align-items: center; height: 40px; padding-top: 1px; }
.flag { margin-left: 13px; }
.net { margin-left: 8px; }
.vol { margin-left: 8px; }
.clock { width: 76px; margin-left: 8px; padding: 1px 0 0 1px; display: flex; flex-direction: column; align-items: center; color: #fff; font: 12px/17px "Open Sans", sans-serif; letter-spacing: -.5px; }
.peek { width: 14px; height: 39px; margin-left: 4px; border: 1px solid #9aa4aa; background: linear-gradient(135deg, #8d979d, #3f4a52); }
```
